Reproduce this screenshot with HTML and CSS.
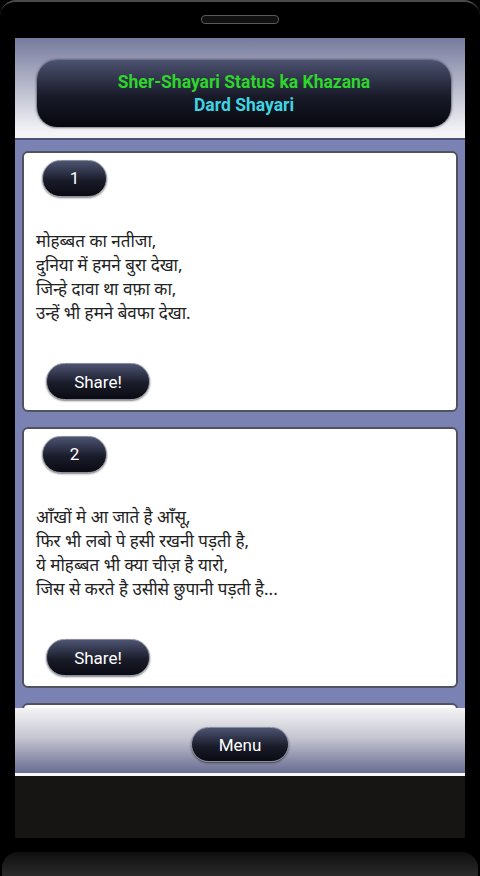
FILE: index.html
```html
<!DOCTYPE html>
<html>
<head>
  <title>Dard Shayari</title>
  <link rel="stylesheet" href="styles.css">
</head>
<body>
  <div class="phone">
    <div class="bezel-top">
      <div class="speaker"></div>
    </div>

    <div class="screen">
      <div class="header">
        <div class="title-pill">
          <div class="title">Sher-Shayari Status ka Khazana</div>
          <div class="subtitle">Dard Shayari</div>
        </div>
      </div>

      <div class="list">
        <div class="card">
          <div class="pill number">1</div>
          <div class="poem">मोहब्बत का नतीजा,<br>दुनिया में हमने बुरा देखा,<br>जिन्हे दावा था वफ़ा का,<br>उन्हें भी हमने बेवफा देखा.</div>
          <button class="pill share">Share!</button>
        </div>

        <div class="card">
          <div class="pill number">2</div>
          <div class="poem">आँखों मे आ जाते है आँसू,<br>फिर भी लबो पे हसी रखनी पड़ती है,<br>ये मोहब्बत भी क्या चीज़ है यारो,<br>जिस से करते है उसीसे छुपानी पड़ती है...</div>
          <button class="pill share">Share!</button>
        </div>

        <div class="card"></div>
      </div>

      <div class="footer">
        <button class="pill menu">Menu</button>
      </div>

      <div class="navbar"></div>
    </div>

    <div class="bezel-bottom">
      <div class="chin"></div>
    </div>
  </div>
</body>
</html>
```

FILE: styles.css
```css
html, body {
  margin: 0;
  padding: 0;
  background-color: #000;
  font-family: Roboto, "Noto Sans", Arial, sans-serif;
}

.phone {
  width: 480px;
  height: 876px;
  overflow: hidden;
  display: flex;
  flex-direction: column;
}

.bezel-top {
  height: 38px;
  box-sizing: border-box;
  border-top: 2px solid #4a4a4a;
  border-radius: 16px 16px 0 0;
  display: flex;
  justify-content: center;
  padding-top: 13px;
}

.speaker {
  width: 76px;
  height: 7px;
  border: 1px solid #5a5a5a;
  border-radius: 4px;
  background-color: #111;
}

.screen {
  margin: 0 15px;
  display: flex;
  flex-direction: column;
}

.header {
  height: 102px;
  box-sizing: border-box;
  padding: 22px 14px 0 22px;
  background: linear-gradient(#767b9d, #f5f5f8 95%);
  border-bottom: 2px solid #4d5270;
}

.title-pill {
  height: 67px;
  box-sizing: border-box;
  border-radius: 20px;
  background: linear-gradient(#4c5270, #181a28 55%, #07080e);
  box-shadow: 0 0 2px 1px rgba(80, 80, 90, 0.7);
  display: flex;
  flex-direction: column;
  align-items: center;
  justify-content: center;
  gap: 3px;
  font-weight: bold;
  font-size: 17.5px;
}

.title {
  color: #2ed52a;
}

.subtitle {
  color: #3fd4e2;
}

.list {
  height: 568px;
  overflow: hidden;
  background-color: #7a82b4;
  padding: 11px 7px 0 7px;
  box-sizing: border-box;
}

.card {
  height: 261px;
  box-sizing: border-box;
  margin-bottom: 15px;
  background-color: #fff;
  border: 2px solid #50525e;
  border-radius: 6px;
  padding: 7px 0 0 18px;
}

.pill {
  display: block;
  box-sizing: border-box;
  border: 1px solid #8a8c98;
  border-radius: 20px;
  background: linear-gradient(#4d5472, #1a1c2a 55%, #090a12);
  box-shadow: 0 1px 2px rgba(0, 0, 0, 0.5);
  color: #fff;
  font-family: Roboto, "Noto Sans", Arial, sans-serif;
  text-align: center;
}

.number {
  width: 65px;
  height: 37px;
  line-height: 35px;
  font-size: 17px;
}

.poem {
  margin: 32px 0 0 -6px;
  font-family: "Noto Sans", "Noto Sans Devanagari", sans-serif;
  font-size: 17px;
  line-height: 24px;
  color: #222;
  height: 96px;
}

.share {
  width: 104px;
  height: 37px;
  margin: 38px 0 0 4px;
  font-size: 17px;
  padding: 0;
}

.footer {
  height: 68px;
  box-sizing: border-box;
  background: linear-gradient(#f4f4f6, #c6c6d2 45%, #686c90);
  border-bottom: 3px solid #f8f8fa;
  display: flex;
  justify-content: center;
  padding-top: 19px;
}

.menu {
  width: 98px;
  height: 35px;
  font-size: 17px;
  padding: 0;
}

.navbar {
  height: 62px;
  background-color: #171513;
}

.bezel-bottom {
  flex: 1;
  display: flex;
  flex-direction: column;
  justify-content: flex-end;
}

.chin {
  height: 24px;
  border-radius: 16px 16px 0 0;
  background: linear-gradient(#0e0e0e, #2a2a2a);
  margin: 0 2px;
}
```
